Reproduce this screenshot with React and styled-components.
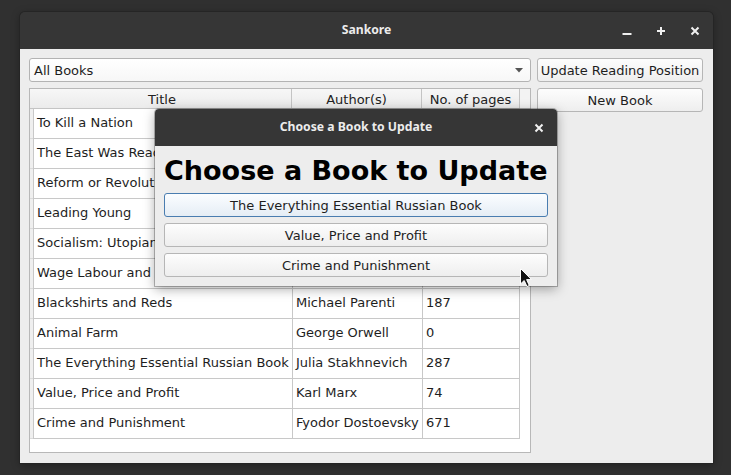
import React from 'react';
import styled, { createGlobalStyle } from 'styled-components';

const GlobalStyle = createGlobalStyle`
  html, body { margin: 0; padding: 0; background: #303030; }
  body { font-family: "DejaVu Sans", "Liberation Sans", sans-serif; font-size: 13px; color: #1e1e1e; }
  * { box-sizing: border-box; }
`;

const Screen = styled.div`
  position: relative;
  width: 731px;
  height: 475px;
  padding: 12px 18px 12px 20px;
  display: flex;
  overflow: hidden;
`;

const Window = styled.div`
  flex: 1;
  display: flex;
  flex-direction: column;
  border-radius: 5px 5px 0 0;
  overflow: hidden;
  box-shadow: 0 0 0 1px #252525, 0 2px 8px rgba(0, 0, 0, 0.35);
`;

const TitleBar = styled.div`
  flex: none;
  height: 37px;
  background: #363636;
  display: grid;
  grid-template-columns: 1fr auto 1fr;
  align-items: center;
  color: #ececec;
`;

const TitleText = styled.div`
  grid-column: 2;
  font-family: "Noto Sans", "Open Sans", sans-serif;
  font-weight: 700;
  font-size: 12.2px;
  padding-bottom: 2px;
`;

const Controls = styled.div`
  grid-column: 3;
  justify-self: end;
  display: flex;
  padding-right: ${p => (p.$pr ?? 1)}px;
`;

const ControlButton = styled.div`
  width: ${p => p.$w || 34}px;
  height: 37px;
  display: flex;
  align-items: center;
  justify-content: center;
  color: #f0f0f0;
`;

const Content = styled.div`
  flex: 1;
  background: #ededed;
  display: grid;
  grid-template-columns: 502px 166px;
  column-gap: 6px;
  padding: 9px 10px 10px 9px;
`;

const LeftCol = styled.div`
  display: flex;
  flex-direction: column;
  gap: 6px;
  min-height: 0;
`;

const RightCol = styled.div`
  display: flex;
  flex-direction: column;
  gap: 6px;
`;

const Combo = styled.div`
  height: 24px;
  flex: none;
  border: 1px solid #b3b3b3;
  border-radius: 3px;
  background: linear-gradient(#ffffff, #f7f7f7);
  display: flex;
  align-items: center;
  justify-content: space-between;
  padding: 0 7px 0 4px;
`;

const Button = styled.div`
  height: 24px;
  flex: none;
  border: 1px solid ${p => (p.$focus ? '#4a7db0' : '#b6b6b6')};
  border-radius: 3px;
  background: ${p => (p.$focus ? 'linear-gradient(#fbfdff, #e5edf5)' : 'linear-gradient(#fdfdfd, #eeeeee)')};
  display: flex;
  align-items: center;
  justify-content: center;
  white-space: nowrap;
  color: #1e1e1e;
`;

const Table = styled.div`
  flex: 1;
  min-height: 0;
  border: 1px solid #b8b8b8;
  background: #ffffff;
  display: flex;
  flex-direction: column;
  overflow: hidden;
`;

const Row = styled.div`
  flex: none;
  display: grid;
  grid-template-columns: 3px 259px 130px 98px 1fr;
  height: ${p => (p.$header ? 20 : 30)}px;
`;

const HeaderCell = styled.div`
  background: ${p => (p.$stub ? '#f3f3f3' : 'linear-gradient(#f7f7f7, #ebebeb)')};
  border-bottom: 1px solid ${p => (p.$stub ? '#d6d6d6' : '#c4c4c4')};
  border-right: ${p => (p.$sep ? '1px solid #c4c4c4' : 'none')};
  padding-top: 1px;
  display: flex;
  align-items: center;
  justify-content: center;
  white-space: nowrap;
  color: #222;
`;

const Corner = styled.div`
  background: #efefef;
  border-bottom: 1px solid #dadada;
`;

const Cell = styled.div`
  border-left: 1px solid #c8c8c8;
  border-bottom: 1px solid #c8c8c8;
  border-right: ${p => (p.$last ? '1px solid #c8c8c8' : 'none')};
  padding: 0 0 2px 3px;
  display: flex;
  align-items: center;
  white-space: nowrap;
  overflow: hidden;
  color: #1e1e1e;
`;

const Dialog = styled.div`
  position: absolute;
  left: 155px;
  top: 109px;
  width: 402px;
  display: flex;
  flex-direction: column;
  border-radius: 4px 4px 0 0;
  overflow: hidden;
  box-shadow: 0 0 0 1px rgba(0, 0, 0, 0.25), 0 3px 12px rgba(0, 0, 0, 0.35);
`;

const DialogBody = styled.div`
  background: #ededed;
  padding: 10px 9px 9px 9px;
  display: flex;
  flex-direction: column;
  gap: 6px;
`;

const Heading = styled.div`
  font-family: "DejaVu Sans", sans-serif;
  font-weight: 700;
  font-size: 27px;
  line-height: 29px;
  height: 31px;
  white-space: nowrap;
  color: #000;
`;

const Cursor = styled.svg`
  position: absolute;
  left: 520px;
  top: 268px;
`;

const books = [
  ['To Kill a Nation', 'Michael Parenti', '185'],
  ['The East Was Read', 'Vijay Prashad', '130'],
  ['Reform or Revolution', 'Rosa Luxemburg', '94'],
  ['Leading Young', 'Anonymous', '112'],
  ['Socialism: Utopian and Scientific', 'Friedrich Engels', '48'],
  ['Wage Labour and Capital', 'Karl Marx', '40'],
  ['Blackshirts and Reds', 'Michael Parenti', '187'],
  ['Animal Farm', 'George Orwell', '0'],
  ['The Everything Essential Russian Book', 'Julia Stakhnevich', '287'],
  ['Value, Price and Profit', 'Karl Marx', '74'],
  ['Crime and Punishment', 'Fyodor Dostoevsky', '671'],
];

const MinIcon = () => (
  <svg width="10" height="10" viewBox="0 0 10 10">
    <rect x="0.5" y="7" width="9" height="2" fill="currentColor" />
  </svg>
);
const PlusIcon = () => (
  <svg width="10" height="10" viewBox="0 0 10 10">
    <rect x="4" y="1" width="2" height="8" fill="currentColor" />
    <rect x="1" y="4" width="8" height="2" fill="currentColor" />
  </svg>
);
const CloseIcon = () => (
  <svg width="10" height="10" viewBox="0 0 10 10">
    <path d="M1.5 1.5 L8.5 8.5 M8.5 1.5 L1.5 8.5" stroke="currentColor" strokeWidth="2" />
  </svg>
);

export default function App() {
  return (
    <>
      <GlobalStyle />
      <Screen>
        <Window>
          <TitleBar>
            <TitleText>Sankore</TitleText>
            <Controls>
              <ControlButton><MinIcon /></ControlButton>
              <ControlButton><PlusIcon /></ControlButton>
              <ControlButton><CloseIcon /></ControlButton>
            </Controls>
          </TitleBar>
          <Content>
            <LeftCol>
              <Combo>
                <span>All Books</span>
                <svg width="8" height="5" viewBox="0 0 8 5">
                  <path d="M0 0 H8 L4 4.5 Z" fill="#555" />
                </svg>
              </Combo>
              <Table>
                <Row $header>
                  <HeaderCell />
                  <HeaderCell $sep>Title</HeaderCell>
                  <HeaderCell $sep>Author(s)</HeaderCell>
                  <HeaderCell $sep>No. of pages</HeaderCell>
                  <HeaderCell $stub />
                </Row>
                {books.map(([t, a, n]) => (
                  <Row key={t}>
                    <Corner />
                    <Cell>{t}</Cell>
                    <Cell>{a}</Cell>
                    <Cell $last>{n}</Cell>
                    <div />
                  </Row>
                ))}
              </Table>
            </LeftCol>
            <RightCol>
              <Button>Update Reading Position</Button>
              <Button>New Book</Button>
            </RightCol>
          </Content>
        </Window>

        <Dialog>
          <TitleBar>
            <TitleText>Choose a Book to Update</TitleText>
            <Controls $pr={0}>
              <ControlButton $w={36}><CloseIcon /></ControlButton>
            </Controls>
          </TitleBar>
          <DialogBody>
            <Heading>Choose a Book to Update</Heading>
            <Button $focus>The Everything Essential Russian Book</Button>
            <Button>Value, Price and Profit</Button>
            <Button>Crime and Punishment</Button>
          </DialogBody>
        </Dialog>

        <Cursor width="13" height="20" viewBox="0 0 13 20">
          <path d="M0.5 0.5 L0.5 16 L4.2 12.5 L7 18.5 L9.3 17.5 L6.6 11.6 L11.5 11.6 Z" fill="#111" stroke="#fff" strokeWidth="1" strokeLinejoin="round" />
        </Cursor>
      </Screen>
    </>
  );
}
